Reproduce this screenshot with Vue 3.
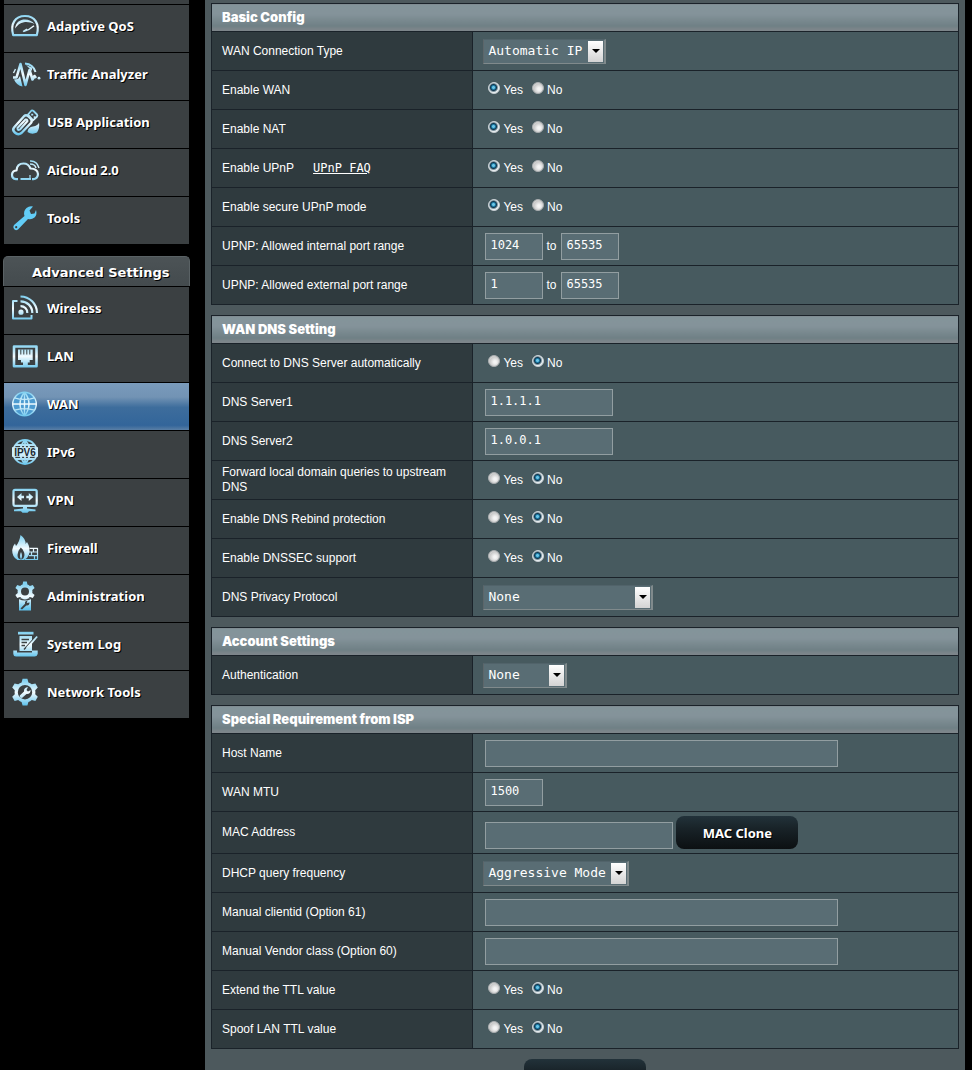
<script setup>
import { reactive } from 'vue'

function gear(cx, cy, outer, inner, teeth) {
  const pts = []
  const step = (Math.PI * 2) / teeth
  for (let i = 0; i < teeth; i++) {
    const a = i * step - Math.PI / 2
    const at = (r, o) => `${(cx + r * Math.cos(a + o * step)).toFixed(2)} ${(cy + r * Math.sin(a + o * step)).toFixed(2)}`
    pts.push(at(inner, -0.32), at(outer, -0.17), at(outer, 0.17), at(inner, 0.32), at(inner, 0.5))
  }
  return `M${pts.join('L')}Z`
}
function disc(cx, cy, r) {
  return `M${cx - r} ${cy}a${r} ${r} 0 1 0 ${r * 2} 0a${r} ${r} 0 1 0 ${-r * 2} 0Z`
}

const icons = {
  qos: [
    { d: 'M2.2 24.2C-1 13 4 5 14 5S29 13 25.8 24.2Z', w: 2.2 },
    { d: 'M4 17.5C5 11 9 8.5 14 8.5C18 8.5 21 10 23.5 13C20 11.5 17 10.8 13 11.2C9 11.8 6.5 14 4 17.5Z' },
    { d: 'M12.5 20.5Q19 18.5 23 14.7M12 20.5L16 18', w: 1.4 }
  ],
  traffic: [
    { d: 'M2 18.5H5.5L9.5 5L14.5 26L18.5 11L21.5 20.5L23.5 17L25 19', w: 2.6 },
    { d: 'M14 4.5A12 12 0 0 1 24.5 13', w: 2 },
    { d: 'M15 6L21 8.5L21 12Z' },
    { d: 'M3 20.5L7 20L9 17L11.5 27.5Q5.5 26.5 3 20.5Z' },
    { d: disc(28, 19.2, 1.4) },
    { d: 'M2.5 14L4.5 10', w: 1.4 }
  ],
  usb: [
    { d: 'M3 20.5L13 9.2Q15 7.5 17.2 9.2L20 12Q21.5 14 20 16L10.5 26Q7 28.5 3.8 25.5Q1 23 3 20.5Z', w: 2.4 },
    { d: 'M6.5 21L14.5 12.5Q16 12 16.5 14L9 22.5Q6.5 24 6.5 21Z', w: 2 },
    { d: 'M17 7.5L20.5 3.5Q21.5 3 22.5 4L26 7.5Q26.8 8.5 26 9.5L22 13.3Z', w: 1.8 },
    { d: 'M20.2 6.7H22.2V8.5H20.2ZM22.7 9.2H24.5V11H22.7Z' },
    { d: 'M16.5 25Q17 20 22 19.5Q27 18.5 28 15.5Q29 21 26 25.5Q21 28 16.5 25Z' }
  ],
  cloud: [
    { d: 'M7 24.2H5Q.8 23.5 1 19.5Q1.5 15.5 5.5 15.5Q6 8.5 12.5 8.5Q17.5 8.5 19.5 13.5Q26.5 13.5 27 19Q27 23.5 22.5 24.2H21', w: 2.2 },
    { d: 'M9.5 23H20V25H9.5Z' },
    { d: 'M19 23V20', w: 1.2 },
    { d: 'M19 6Q26 5.5 28 13M19 9Q24 9 25 13', w: 1.4 }
  ],
  tools: [
    { d: 'M3 22L13.5 13Q12 8 15.5 5Q18.5 2.5 22 3.5L18.5 7.5L20 11L23.5 10.5L25 7Q26.5 11.5 23.5 14.5Q20.5 17 17 16L7 26.5Q4.5 28 3 26Q1.5 24 3 22Z', c: 'sky' },
    { d: disc(5.2, 24.2, 1.1), c: 'hole' }
  ],
  wireless: [
    { d: 'M6.5 8H2V25.5H20.5V22', w: 2 },
    { d: disc(10, 19.2, 2.6) },
    { d: 'M9.5 13.2A6.5 6.5 0 0 1 16.3 20M9.5 8.3A11.5 11.5 0 0 1 21.3 20M9.5 3.5A16.5 16.5 0 0 1 26 20', w: 2.2 }
  ],
  lan: [
    { d: 'M3 5.5H25.5V25.3H3Z', w: 2.6 },
    { d: 'M7 8.5H21.7V19H18.7V21.5H16.8V24.5H12V21.5H10V19H7Z' },
    { d: 'M9.8 8.5V13.5M12.8 8.5V13.5M15.8 8.5V13.5M18.8 8.5V13.5', w: 1, c: 'dark' }
  ],
  wan: [
    { d: disc(13.5, 15, 12), c: 'glow' },
    { d: disc(13.5, 15, 11.8) + 'M13.5 3V27M1.7 15H25.3M3.5 8.8Q13.5 12 23.5 8.8M3.5 21.2Q13.5 18 23.5 21.2M13.5 3Q4.5 15 13.5 27M13.5 3Q22.5 15 13.5 27', w: 1.4 }
  ],
  ipv6: [
    { d: disc(14, 15, 12) + 'M14 3V27M4.5 8H23.5M4.5 22H23.5M14 3Q4 15 14 27M14 3Q24 15 14 27', w: 1.8 },
    { d: 'M1 10.2H27V19.8H1Z', c: 'pale' }
  ],
  vpn: [
    { d: 'M4 4.8H24Q25.7 4.8 25.7 6.5V19Q25.7 20.8 24 20.8H4Q2.5 20.8 2.5 19V6.5Q2.5 4.8 4 4.8Z', w: 2.2 },
    { d: 'M6 12L10.5 8V10.7H13V13.3H10.5V16ZM22.3 12L17.8 8V10.7H15.3V13.3H17.8V16Z' },
    { d: 'M12 21H16V23.5L24.5 24.5V26.2H18L16.5 27.8H11.5L10 26.2H3V24.500L12 23.5Z' }
  ],
  firewall: [
    { d: 'M9.5 2Q15 6 14.5 11L16 9Q20 15 17.8 22Q16.5 25.5 13 27H6.5Q1 24 1.2 17Q1.5 13 4 10.5L5 13Q8.5 9 9.5 2Z' },
    { d: 'M9.8 14.5Q13.5 18 13.5 22Q13 26 10 26.5Q6.5 26 6.5 22Q6.5 18 9.8 14.5Z', c: 'hole' },
    { d: 'M10 19Q12 23 10 26.5Q8 23 10 19Z' },
    { d: 'M18.5 15.3H26.5V26.5H14M18 19H26.5M18 22.7H26.5M22.5 15.3V19M20.5 19V22.7M23.5 22.7V26.5', w: 1.2 }
  ],
  admin: [
    { d: gear(14, 10.5, 10.2, 7.4, 6) + disc(14, 10.5, 4) },
    { d: 'M8 17.5H20V29.5H8Z' },
    { d: 'M9.5 27.5L14 22.8Q13.5 20 16.5 19.5L15.8 22L18.5 21.5Q18.5 25 15.3 24.5L11 28.5Z', c: 'hole' },
    { d: 'M8 17.500Q14 20.500 20 17.500', w: 1.2, c: 'dark' }
  ],
  log: [
    { d: 'M7 2.8H22.5V5.5H7Z' },
    { d: 'M8.5 7H21V22H8.5Z' },
    { d: 'M10.5 10.5H18M10.5 13.500H16M10.5 16.5H14M13 20.500L23.500 9', w: 1.3, c: 'dark' },
    { d: 'M15 18.5L25.5 7L26.8 8L17 19.5Z' },
    { d: 'M2.3 21.5H6V23.500H21V21.500H26.7V25Q26 27.5 23.5 27.5H5Q2.5 27.5 2.3 25Z' }
  ],
  nettools: [
    { d: gear(14, 15.2, 13.6, 10.4, 6) + disc(14, 15.2, 7.2) },
    { d: 'M8.8 18.5L13 14.5Q12.5 10.5 17 10L15.5 13L17 14.5L19.7 13Q19.5 17.5 15.5 17L11 21Q8.5 21 8.8 18.5Z' }
  ]
}

const general = [
  { label: 'Adaptive QoS', icon: 'qos' },
  { label: 'Traffic Analyzer', icon: 'traffic' },
  { label: 'USB Application', icon: 'usb' },
  { label: 'AiCloud 2.0', icon: 'cloud' },
  { label: 'Tools', icon: 'tools' }
]
const advanced = [
  { label: 'Wireless', icon: 'wireless' },
  { label: 'LAN', icon: 'lan' },
  { label: 'WAN', icon: 'wan', active: true },
  { label: 'IPv6', icon: 'ipv6' },
  { label: 'VPN', icon: 'vpn' },
  { label: 'Firewall', icon: 'firewall' },
  { label: 'Administration', icon: 'admin' },
  { label: 'System Log', icon: 'log' },
  { label: 'Network Tools', icon: 'nettools' }
]
const menus = [{ items: general }, { title: 'Advanced Settings', items: advanced }]

const sections = reactive([
  {
    title: 'Basic Config',
    rows: [
      { id: 'type', label: 'WAN Connection Type', kind: 'select', size: 'm', value: 'Automatic IP' },
      { id: 'wan', label: 'Enable WAN', kind: 'radio', value: 'Yes' },
      { id: 'nat', label: 'Enable NAT', kind: 'radio', value: 'Yes' },
      { id: 'upnp', label: 'Enable UPnP', kind: 'radio', value: 'Yes', faq: 'UPnP FAQ' },
      { id: 'secure', label: 'Enable secure UPnP mode', kind: 'radio', value: 'Yes' },
      { id: 'int', label: 'UPNP: Allowed internal port range', kind: 'range', value: '1024', to: '65535' },
      { id: 'ext', label: 'UPNP: Allowed external port range', kind: 'range', value: '1', to: '65535' }
    ]
  },
  {
    title: 'WAN DNS Setting',
    rows: [
      { id: 'dnsauto', label: 'Connect to DNS Server automatically', kind: 'radio', value: 'No' },
      { id: 'dns1', label: 'DNS Server1', kind: 'text', size: 'm', value: '1.1.1.1' },
      { id: 'dns2', label: 'DNS Server2', kind: 'text', size: 'm', value: '1.0.0.1' },
      { id: 'forward', label: 'Forward local domain queries to upstream DNS', kind: 'radio', value: 'No' },
      { id: 'rebind', label: 'Enable DNS Rebind protection', kind: 'radio', value: 'No' },
      { id: 'dnssec', label: 'Enable DNSSEC support', kind: 'radio', value: 'No' },
      { id: 'privacy', label: 'DNS Privacy Protocol', kind: 'select', size: 'xl', value: 'None' }
    ]
  },
  {
    title: 'Account Settings',
    rows: [{ id: 'auth', label: 'Authentication', kind: 'select', size: 's', value: 'None' }]
  },
  {
    title: 'Special Requirement from ISP',
    rows: [
      { id: 'host', label: 'Host Name', kind: 'text', size: 'xl', value: '' },
      { id: 'mtu', label: 'WAN MTU', kind: 'text', size: 's', value: '1500' },
      { id: 'mac', label: 'MAC Address', kind: 'text', size: 'l', value: '', action: 'MAC Clone' },
      { id: 'dhcp', label: 'DHCP query frequency', kind: 'select', size: 'l', value: 'Aggressive Mode' },
      { id: 'opt61', label: 'Manual clientid (Option 61)', kind: 'text', size: 'xl', value: '' },
      { id: 'opt60', label: 'Manual Vendor class (Option 60)', kind: 'text', size: 'xl', value: '' },
      { id: 'ttl', label: 'Extend the TTL value', kind: 'radio', value: 'No' },
      { id: 'spoof', label: 'Spoof LAN TTL value', kind: 'radio', value: 'No' }
    ]
  }
])
</script>

<template>
  <div class="page">
    <svg class="defs" aria-hidden="true">
      <defs>
        <linearGradient id="ice" gradientUnits="userSpaceOnUse" x1="0" y1="3" x2="0" y2="28">
          <stop offset="0" stop-color="#7fd0f0" />
          <stop offset=".5" stop-color="#f2fbff" />
          <stop offset="1" stop-color="#62c3ec" />
        </linearGradient>
      </defs>
    </svg>

    <nav class="sidebar">
      <div class="stub"></div>
      <div v-for="(menu, m) in menus" :key="m" class="menu">
        <h2 v-if="menu.title">{{ menu.title }}</h2>
        <a v-for="item in menu.items" :key="item.label" href="#" :class="{ active: item.active }">
          <svg class="icon" viewBox="0 0 28 28" aria-hidden="true">
            <path
              v-for="(p, i) in icons[item.icon]"
              :key="i"
              :d="p.d"
              :stroke-width="p.w"
              :class="[p.w ? 'line' : 'solid', p.c]"
            />
            <text v-if="item.icon === 'ipv6'" x="14" y="19" text-anchor="middle">IPV6</text>
          </svg>
          <span>{{ item.label }}</span>
        </a>
      </div>
    </nav>

    <main>
      <table v-for="s in sections" :key="s.title">
        <colgroup>
          <col class="name" />
          <col />
        </colgroup>
        <thead>
          <tr><th colspan="2">{{ s.title }}</th></tr>
        </thead>
        <tbody>
          <tr v-for="r in s.rows" :key="r.id" :class="{ tall: r.action }">
            <th scope="row">
              <span v-if="r.kind === 'radio'" :id="r.id + '-label'">{{ r.label }}</span>
              <label v-else :for="r.id">{{ r.label }}</label>
              <a v-if="r.faq" class="faq" href="#">{{ r.faq }}</a>
            </th>
            <td>
              <div v-if="r.kind === 'radio'" class="field radios" role="radiogroup" :aria-labelledby="r.id + '-label'">
                <label v-for="o in ['Yes', 'No']" :key="o">
                  <input v-model="r.value" type="radio" :name="r.id" :value="o" /><span>{{ o }}</span>
                </label>
              </div>
              <div v-else-if="r.kind === 'select'" class="field">
                <div class="select" :class="r.size">
                  <select :id="r.id" v-model="r.value">
                    <option>{{ r.value }}</option>
                  </select>
                  <span class="arrow"></span>
                </div>
              </div>
              <div v-else class="field">
                <input :id="r.id" v-model="r.value" type="text" :class="r.size || 's'" />
                <template v-if="r.kind === 'range'">
                  <label class="to" :for="r.id + '-to'">to</label>
                  <input :id="r.id + '-to'" v-model="r.to" type="text" class="s" />
                </template>
                <button v-if="r.action" type="button">{{ r.action }}</button>
              </div>
            </td>
          </tr>
        </tbody>
      </table>
      <div class="submit"><button type="button" aria-label="Apply"></button></div>
    </main>
  </div>
</template>

<style>
body {
  background: #000;
}
</style>

<style scoped>
.page {
  display: flex;
  align-items: stretch;
  gap: 15px;
  height: 100vh;
  overflow: hidden;
  padding: 0 7px 0 3px;
  box-sizing: border-box;
  background: #000;
  color: #fff;
  font-family: "Liberation Sans", Arial, sans-serif;
  font-size: 12px;
}
.defs {
  position: absolute;
  width: 0;
  height: 0;
}

.sidebar {
  flex: 0 0 187px;
  font: bold 13px/16px "Noto Sans", Verdana, sans-serif;
  text-shadow: 1px 1px 0 #000;
}
.stub {
  height: 4px;
  margin: 0 1px;
  background: #3b4042;
}
.menu {
  margin-bottom: 12px;
}
.menu h2 {
  height: 30px;
  margin: 0;
  padding: 8px 0 0 28px;
  box-sizing: border-box;
  font: bold 13px/16px "DejaVu Sans", Verdana, sans-serif;
  background: linear-gradient(#4c5356, #444b4e);
  border: 1px solid #5a6265;
  border-bottom: 0;
  border-radius: 5px 5px 0 0;
}
.menu a {
  display: flex;
  align-items: flex-start;
  gap: 8px;
  margin: 0 1px;
  padding: 6px 0 0 7px;
  height: 41px;
  border-top: 1px solid #000;
  background: #3b4042;
  color: #fff;
  text-decoration: none;
}
.menu a.active {
  background: linear-gradient(#7a9bbb, #7293b4 30%, #3d6d9c 52%, #33659a 90%, #5a7fa5);
}
.menu a span {
  padding-top: 7px;
}
.icon {
  width: 28px;
  height: 28px;
  overflow: visible;
}
.line {
  fill: none;
  stroke: url(#ice);
  stroke-linejoin: round;
}
.solid {
  fill: url(#ice);
  fill-rule: evenodd;
}
.solid.hole {
  fill: #3b4042;
}
.solid.sky {
  fill: #62cdf7;
}
.solid.pale {
  fill: #cdeefb;
}
.solid.glow {
  fill: #4d9bd0;
}
.line.dark {
  stroke: #3b4042;
}
.icon text {
  font: bold 10px "Liberation Sans", sans-serif;
  fill: #1c2830;
  text-shadow: none;
}

main {
  flex: 1;
  padding: 3px 6px 0;
  background: #4d595d;
}
table {
  width: 100%;
  margin-bottom: 10px;
  border-collapse: collapse;
  table-layout: fixed;
}
.name {
  width: 35%;
}
th,
td {
  box-sizing: border-box;
  border: 1px solid #1a2229;
  padding: 0 10px;
  height: 39px;
  text-align: left;
  font-weight: normal;
  line-height: 15px;
}
thead th {
  height: 28px;
  padding-bottom: 2px;
  background: linear-gradient(#83949a, #84939a 35%, #6f8085 80%, #7d858a 92%);
  font: 900 13px/16px Inter, "Arial Black", sans-serif;
}
tbody th {
  background: #2f3a3e;
}
td {
  background: #475a5f;
}
.tall td {
  height: 42px;
}
.faq {
  margin-left: 19px;
  color: #fff;
  font-family: "DejaVu Sans Mono", monospace;
}
.field {
  display: flex;
  align-items: center;
}
.tall .field {
  align-items: flex-end;
  gap: 3px;
}

input[type="text"] {
  height: 27px;
  margin: 0 0 0 2px;
  padding: 0 4px 2px;
  box-sizing: border-box;
  border: 1px solid #929ea1;
  border-radius: 0;
  background: #596d74;
  color: #fff;
  font: 12px "DejaVu Sans Mono", monospace;
}
input.s {
  width: 58px;
}
input.m {
  width: 128px;
}
input.l {
  width: 188px;
}
input.xl {
  width: 353px;
}
.to {
  width: 16px;
  text-align: center;
}

.radios {
  gap: 9px;
  padding-left: 5px;
}
.radios label {
  display: flex;
  align-items: flex-start;
  gap: 3px;
}
.radios span {
  padding-top: 1px;
}
input[type="radio"] {
  appearance: none;
  width: 12px;
  height: 12px;
  margin: 0;
  border: 1px solid #a9adaf;
  border-radius: 50%;
  background: radial-gradient(circle at 60% 60%, #f4f4f4 15%, #c9c9c9 60%, #eee);
}
input[type="radio"]:checked {
  border-color: #c9d0d4;
  background: radial-gradient(circle at 45% 45%, #6cc4e4 0 1px, #1878a4 2px, #12384f 3px, #e8eef0 5px);
}

.select {
  display: grid;
  height: 25px;
}
.select.s {
  width: 84px;
}
.select.m {
  width: 123px;
}
.select.l {
  width: 146px;
}
.select.xl {
  width: 170px;
}
.select > * {
  grid-area: 1 / 1;
}
select {
  appearance: none;
  width: 100%;
  margin: 0;
  padding: 0 0 1px 4px;
  border: 2px solid;
  border-width: 1px 2px 1px 1px;
  border-color: #51636a #808a8c #808a8c #5c666a;
  border-radius: 0;
  background: #596d74;
  color: #fff;
  font: 13px "DejaVu Sans Mono", monospace;
}
.arrow {
  display: flex;
  align-items: center;
  justify-content: center;
  justify-self: end;
  width: 15px;
  margin: 2px 3px 2px 0;
  background: linear-gradient(#fff, #d3d3d3);
  pointer-events: none;
}
.arrow::after {
  content: "";
  border: 4px solid transparent;
  border-top-color: #000;
  border-bottom: 0;
}

button {
  width: 122px;
  height: 33px;
  border: 0;
  border-radius: 8px;
  background: linear-gradient(#22323a, #182227 40%, #0c1012);
  color: #fff;
  font: bold 13px "Noto Sans", Verdana, sans-serif;
  text-shadow: 1px 1px 0 #000;
}
.submit {
  display: flex;
  justify-content: center;
}
</style>
